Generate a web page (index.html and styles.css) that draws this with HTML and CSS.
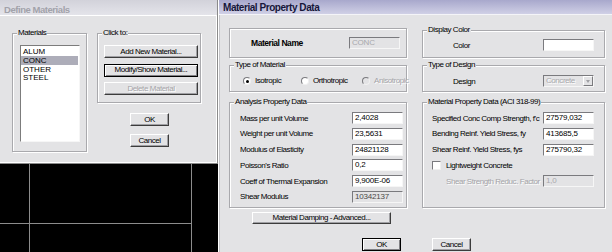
FILE: index.html
```html
<!DOCTYPE html>
<html lang="en">
<head>
    <meta charset="UTF-8">
    <title>Material Property Data</title>
    <link rel="stylesheet" href="styles.css">
</head>
<body>
    <div class="left-col">
        <div class="window define">
            <div class="titlebar inactive">Define Materials</div>
            <div class="define-body">
                <fieldset class="group materials">
                    <legend>Materials</legend>
                    <ul class="listbox">
                        <li>ALUM</li>
                        <li class="selected">CONC</li>
                        <li>OTHER</li>
                        <li>STEEL</li>
                    </ul>
                </fieldset>
                <div class="define-side">
                    <fieldset class="group click-to">
                        <legend>Click to:</legend>
                        <div class="click-buttons">
                            <button class="btn wide">Add New Material...</button>
                            <button class="btn wide focused">Modify/Show Material...</button>
                            <button class="btn wide" disabled>Delete Material</button>
                        </div>
                    </fieldset>
                    <div class="define-buttons">
                        <button class="btn small">OK</button>
                        <button class="btn small">Cancel</button>
                    </div>
                </div>
            </div>
        </div>
        <div class="canvas"></div>
    </div>

    <div class="window props">
        <div class="titlebar active">Material Property Data</div>
        <div class="props-body">
            <div class="cols">
                <div class="col col-left">
                    <fieldset class="group name-box">
                        <div class="row-line name-line">
                            <span class="bold-label">Material Name</span>
                            <span class="field disabled">CONC</span>
                        </div>
                    </fieldset>
                    <fieldset class="group type-box">
                        <legend>Type of Material</legend>
                        <div class="radios">
                            <span class="radio-item"><span class="radio checked"></span>Isotropic</span>
                            <span class="radio-item"><span class="radio"></span>Orthotropic</span>
                            <span class="radio-item off"><span class="radio"></span>Anisotropic</span>
                        </div>
                    </fieldset>
                    <fieldset class="group data-box">
                        <legend>Analysis Property Data</legend>
                        <div class="data-rows left-rows">
                            <span>Mass per unit Volume</span><span class="field">2,4028</span>
                            <span>Weight per unit Volume</span><span class="field">23,5631</span>
                            <span>Modulus of Elasticity</span><span class="field">24821128</span>
                            <span>Poisson's Ratio</span><span class="field">0,2</span>
                            <span>Coeff of Thermal Expansion</span><span class="field">9,900E-06</span>
                            <span>Shear Modulus</span><span class="field disabled dark">10342137</span>
                        </div>
                    </fieldset>
                </div>
                <div class="col col-right">
                    <fieldset class="group color-box">
                        <legend>Display Color</legend>
                        <div class="row-line side-line">
                            <span>Color</span>
                            <span class="field"></span>
                        </div>
                    </fieldset>
                    <fieldset class="group design-box">
                        <legend>Type of Design</legend>
                        <div class="row-line side-line">
                            <span>Design</span>
                            <span class="combo"><span class="combo-text">Concrete</span><span class="combo-arrow"></span></span>
                        </div>
                    </fieldset>
                    <fieldset class="group data-box">
                        <legend>Material Property Data (ACI 318-99)</legend>
                        <div class="data-rows right-rows">
                            <span>Specified Conc Comp Strength, f'c</span><span class="field">27579,032</span>
                            <span>Bending Reinf. Yield Stress, fy</span><span class="field">413685,5</span>
                            <span>Shear Reinf. Yield Stress, fys</span><span class="field">275790,32</span>
                            <span class="check-item"><span class="checkbox"></span>Lightweight Concrete</span><span></span>
                            <span class="indent off">Shear Strength Reduc. Factor</span><span class="field disabled">1,0</span>
                        </div>
                    </fieldset>
                </div>
            </div>
            <div class="damping-row">
                <button class="btn damping">Material Damping - Advanced...</button>
            </div>
            <div class="props-buttons">
                <button class="btn small focused">OK</button>
                <button class="btn small">Cancel</button>
            </div>
        </div>
    </div>
</body>
</html>
```

FILE: styles.css
```css
body {
    margin: 0;
    width: 612px;
    height: 252px;
    overflow: hidden;
    display: flex;
    background-color: #000000;
    font-family: "Liberation Sans", Arial, sans-serif;
    font-size: 8px;
    letter-spacing: -0.45px;
    color: #000000;
    white-space: nowrap;
}

.left-col {
    width: 218px;
    display: flex;
    flex-direction: column;
}

.window {
    background-color: #e3e3e5;
    box-sizing: border-box;
}

.titlebar {
    font-weight: bold;
    padding-left: 4px;
    box-sizing: border-box;
}

.titlebar.inactive {
    height: 16px;
    line-height: 19px;
    font-size: 9.5px;
    color: #a2a2aa;
    background: linear-gradient(#d2d2da, #e4e4ea);
    border-bottom: 1px solid #ffffff;
}

.titlebar.active {
    height: 15px;
    line-height: 16px;
    font-size: 10px;
    color: #16163a;
    background: linear-gradient(#a8a8cc, #d0d0e6);
    border-bottom: 1px solid #f4f4f8;
}

/* Define Materials dialog */

.define {
    height: 164px;
    border-right: 1px solid #8a8a8a;
    border-bottom: 1px solid #8a8a8a;
    box-shadow: inset -1px -1px 0 #ffffff;
}

.define-body {
    display: flex;
    padding: 12px 0 0 12px;
    gap: 10px;
}

.group {
    margin: 0;
    padding: 0;
    min-width: 0;
    box-sizing: border-box;
    border: 1px solid #a9a9ad;
    box-shadow: 1px 1px 0 #ffffff, inset 1px 1px 0 #ffffff;
}

.group legend {
    padding: 0 1px;
    margin-left: 4px;
    line-height: 10px;
    background-color: #e3e3e5;
}

.materials {
    width: 75px;
    height: 124px;
}

.listbox {
    list-style: none;
    margin: 7px 0 0 7px;
    padding: 1px 0 0 0;
    width: 60px;
    height: 97px;
    box-sizing: border-box;
    background-color: #ffffff;
    border: 1px solid;
    border-color: #7c7c7c #f6f6f6 #f6f6f6 #7c7c7c;
}

.listbox li {
    height: 8.8px;
    line-height: 9px;
    padding-left: 2px;
    margin-right: 1px;
    letter-spacing: 0;
}

.listbox .selected {
    background-color: #adadb9;
}

.define-side {
    display: flex;
    flex-direction: column;
}

.click-to {
    width: 104px;
    height: 75px;
}

.click-buttons {
    display: flex;
    flex-direction: column;
    gap: 5.5px;
    padding: 7px 0 0 6px;
}

.btn {
    margin: 0;
    padding: 0;
    box-sizing: border-box;
    background-color: #e3e3e5;
    border: 1px solid;
    border-color: #ffffff #3c3c3c #3c3c3c #ffffff;
    box-shadow: inset -1px -1px 0 #a0a0a4;
    font-family: inherit;
    font-size: 8px;
    letter-spacing: -0.45px;
    color: #000000;
    line-height: 10px;
    white-space: nowrap;
}

.btn.focused {
    border-color: #000000;
    box-shadow: inset 1px 1px 0 #ffffff, inset -1px -1px 0 #808084;
}

.btn:disabled {
    color: #a4a4a8;
    text-shadow: 1px 1px 0 #ffffff;
}

.btn.wide {
    width: 94px;
    height: 13px;
}

.btn.small {
    width: 39px;
    height: 13px;
}

.define-buttons {
    display: flex;
    flex-direction: column;
    gap: 8px;
    padding: 10px 0 0 33px;
}

.canvas {
    flex: 1;
    background:
        linear-gradient(#8c8c8c, #8c8c8c) 29px 0 / 1px 100% no-repeat,
        linear-gradient(#8c8c8c, #8c8c8c) 191px 0 / 1px 100% no-repeat,
        linear-gradient(#8c8c8c, #8c8c8c) 0 59px / 192px 1px no-repeat,
        #000000;
}

/* Material Property Data dialog */

.props {
    width: 394px;
    height: 252px;
    border-left: 1px solid #ffffff;
    box-shadow: inset 1px 0 0 #c4c4c8;
}

.props-body {
    display: flex;
    flex-direction: column;
}

.cols {
    display: grid;
    grid-template-columns: 178px 183px;
    column-gap: 15px;
    padding: 10px 0 0 10px;
}

.col {
    display: flex;
    flex-direction: column;
}

.col-left .name-box {
    margin-top: 3px;
    height: 30px;
}

.color-box {
    height: 33px;
}

.type-box,
.design-box {
    margin-top: 2px;
    height: 32px;
}

.data-box {
    margin-top: 5px;
    height: 111px;
}

.row-line {
    display: flex;
    align-items: center;
}

.name-line {
    height: 28px;
    padding: 0 6px 0 21px;
    justify-content: space-between;
}

.bold-label {
    font-weight: bold;
    font-size: 8.5px;
}

.side-line {
    padding: 4px 10px 0 30px;
    justify-content: space-between;
}

.design-box .side-line {
    padding-top: 5px;
}

.field {
    display: block;
    width: 51px;
    height: 12px;
    box-sizing: border-box;
    padding-left: 2px;
    line-height: 10px;
    background-color: #ffffff;
    border: 1px solid;
    border-color: #7a7a7e #f6f6f6 #f6f6f6 #7a7a7e;
    letter-spacing: -0.2px;
}

.field.disabled {
    background-color: #e3e3e5;
    color: #a8a8ac;
}

.field.disabled.dark {
    color: #4a4a4a;
}

.combo {
    display: flex;
    width: 51px;
    height: 12px;
    box-sizing: border-box;
    border: 1px solid;
    border-color: #7a7a7e #f6f6f6 #f6f6f6 #7a7a7e;
}

.combo-text {
    flex: 1;
    padding-left: 2px;
    line-height: 10px;
    color: #a8a8ac;
    text-shadow: 1px 1px 0 #ffffff;
}

.combo-arrow {
    width: 10px;
    box-sizing: border-box;
    border: 1px solid;
    border-color: #ffffff #7a7a7e #7a7a7e #ffffff;
    display: flex;
    align-items: center;
    justify-content: center;
}

.combo-arrow::after {
    content: "";
    border-left: 2.5px solid transparent;
    border-right: 2.5px solid transparent;
    border-top: 3px solid #a0a0a4;
}

.radios {
    display: grid;
    grid-template-columns: 58px 61px auto;
    padding: 6px 0 0 13px;
    line-height: 10px;
}

.radio-item {
    display: flex;
    align-items: center;
    gap: 4px;
}

.off {
    color: #a4a4a8;
    text-shadow: 1px 1px 0 #ffffff;
}

.radio {
    width: 8px;
    height: 8px;
    box-sizing: border-box;
    border-radius: 50%;
    background-color: #ffffff;
    border: 1px solid;
    border-color: #7a7a7e #f0f0f0 #f0f0f0 #7a7a7e;
    display: flex;
    align-items: center;
    justify-content: center;
}

.off .radio {
    background-color: #e3e3e5;
}

.radio.checked::after {
    content: "";
    width: 3px;
    height: 3px;
    border-radius: 50%;
    background-color: #000000;
}

.data-rows {
    display: grid;
    grid-auto-rows: 12px;
    row-gap: 3.8px;
    align-items: center;
}

.left-rows {
    grid-template-columns: 1fr 51px;
    padding: 5px 3px 0 10px;
}

.right-rows {
    grid-template-columns: 1fr 51px;
    padding: 5px 10px 0 9px;
}

.check-item {
    display: flex;
    align-items: center;
    gap: 5px;
}

.checkbox {
    width: 9px;
    height: 9px;
    box-sizing: border-box;
    background-color: #ffffff;
    border: 1px solid;
    border-color: #7a7a7e #f0f0f0 #f0f0f0 #7a7a7e;
}

.indent {
    padding-left: 14px;
}

.damping-row {
    padding: 4px 0 0 33px;
}

.btn.damping {
    width: 139px;
    height: 12px;
}

.props-buttons {
    display: flex;
    gap: 31px;
    padding: 14px 0 0 143px;
}
```
